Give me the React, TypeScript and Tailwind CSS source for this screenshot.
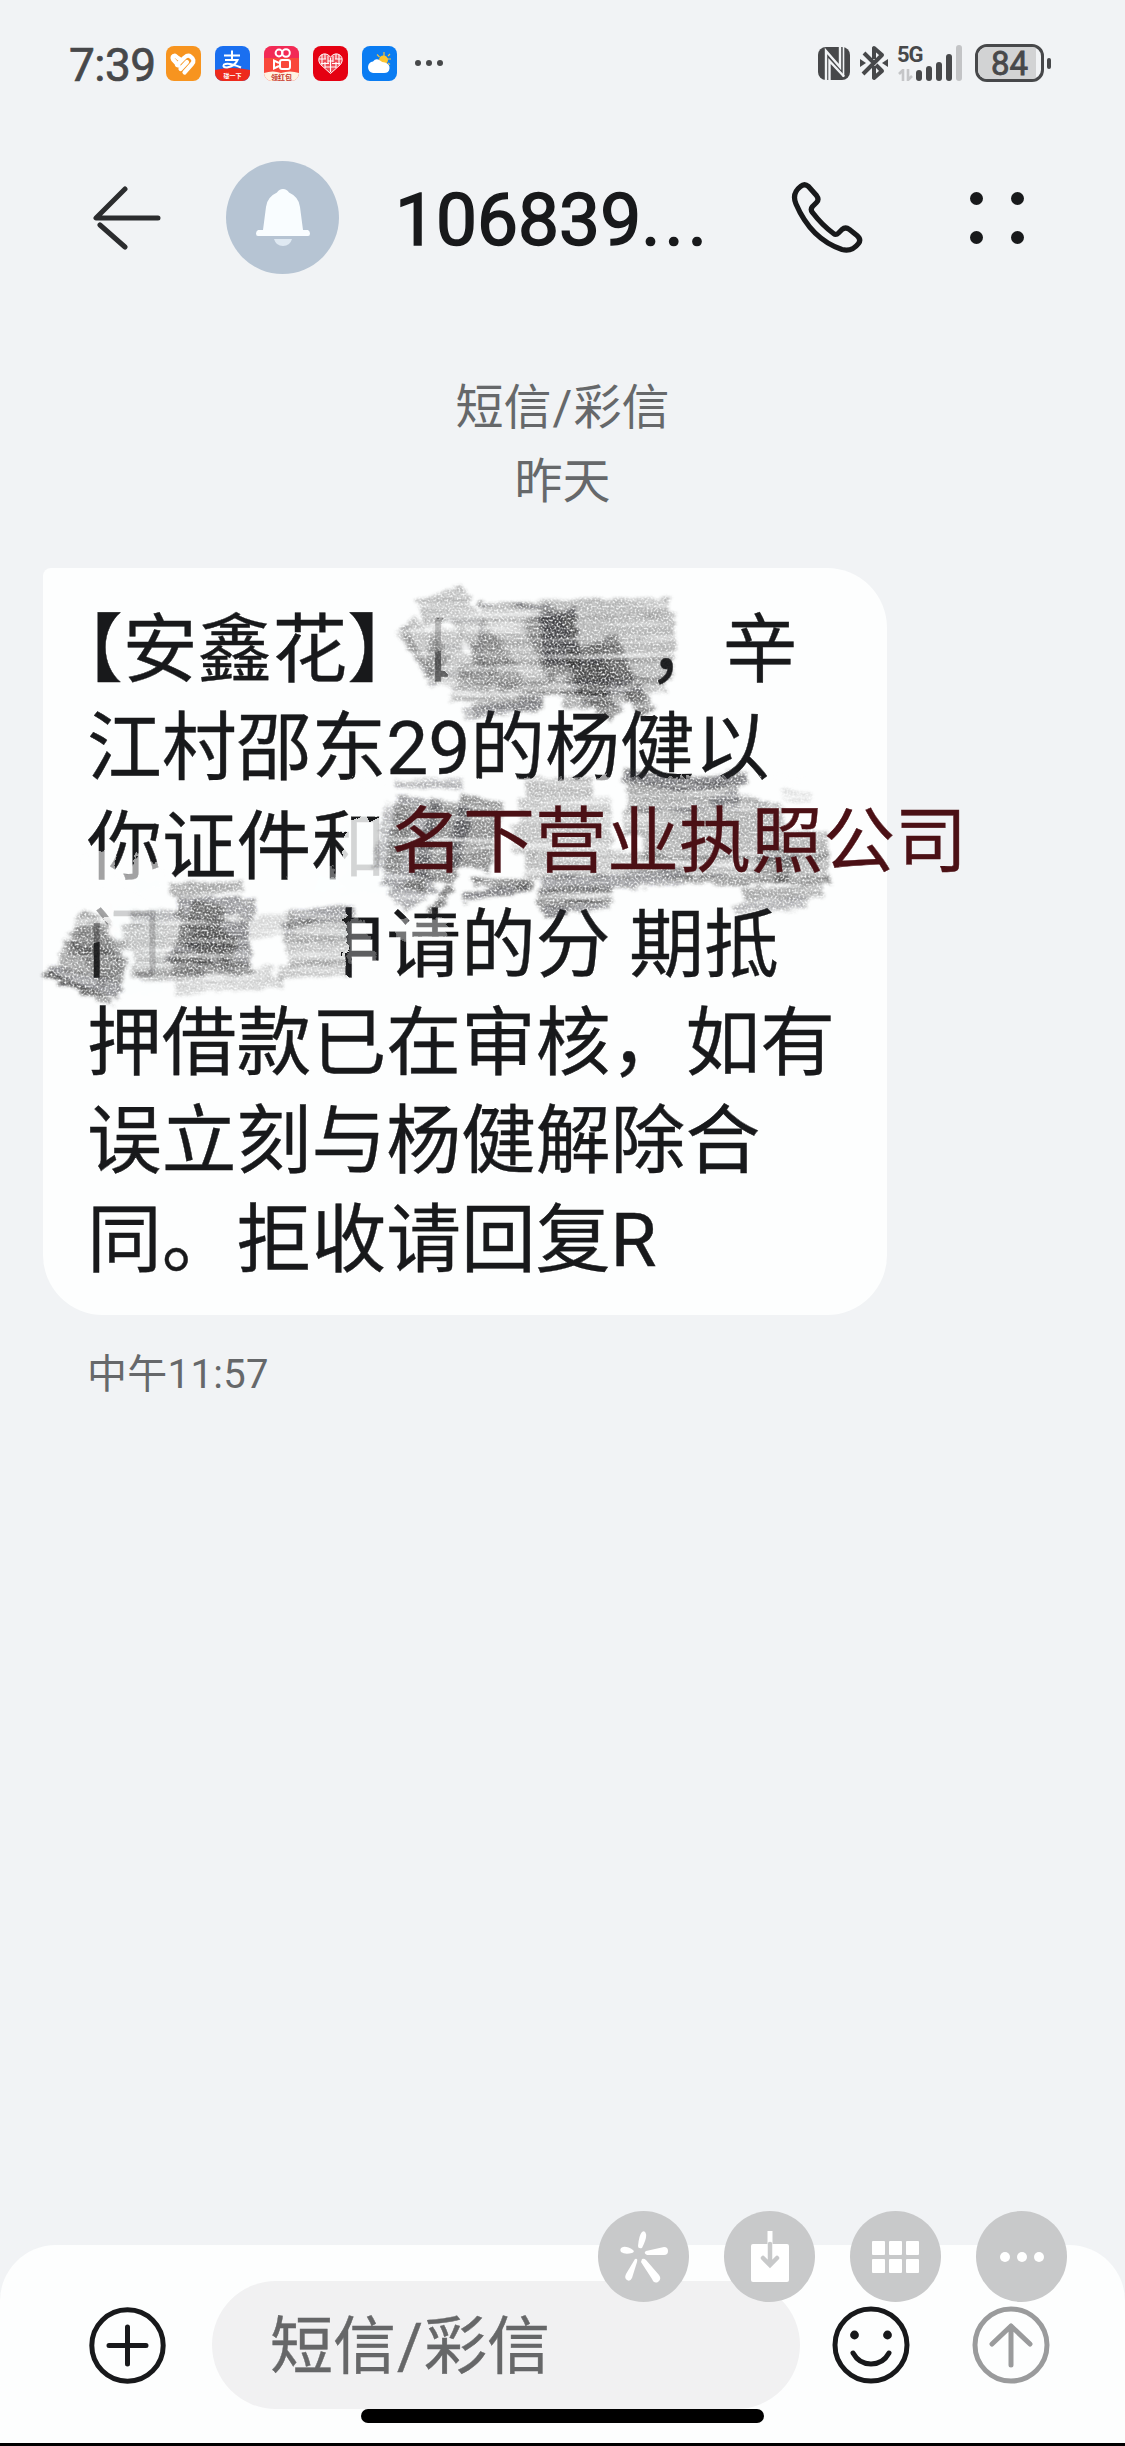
import React from 'react';

interface Stroke {
  d: string;
  w: number;
  o: number;
}

const messageLines: string[] = [
  '江村邵东29的杨健以',
  '你证件和',
  '门　　申请的分 期抵',
  '押借款已在审核，如有',
  '误立刻与杨健解除合',
  '同。拒收请回复R',
];

// Coordinates are relative to the top left corner of the bubble
const wipes: Stroke[] = [
  { d: 'M392 50 L394 84', w: 26, o: 0.6 },
  { d: 'M425 45 L425 120', w: 46, o: 0.9 },
  { d: 'M300 214 L760 212', w: 7, o: 0.6 },
  { d: 'M52 285 L58 320 M85 300 L115 320', w: 34, o: 0.6 },
  { d: 'M92 318 L300 316', w: 10, o: 0.4 },
  { d: 'M326 250 L326 325', w: 52, o: 0.82 },
  { d: 'M278 300 L290 325', w: 22, o: 0.35 },
  { d: 'M92 340 L92 425', w: 56, o: 0.8 },
  { d: 'M50 335 L60 372', w: 30, o: 0.6 },
  { d: 'M284 345 L284 425', w: 36, o: 0.97 },
  { d: 'M306 355 L324 400', w: 24, o: 0.3 },
  { d: 'M352 362 L404 360', w: 18, o: 0.4 },
];

const pencil: Stroke[] = [
  // first line
  { d: 'M362 56 L398 100', w: 26, o: 0.3 },
  { d: 'M360 60 L392 118', w: 8, o: 0.35 },
  { d: 'M378 46 L412 34 L470 118', w: 28, o: 0.34 },
  { d: 'M404 60 L400 98 L450 112', w: 34, o: 0.3 },
  { d: 'M438 44 L628 38', w: 18, o: 0.34 },
  { d: 'M436 64 L632 58', w: 24, o: 0.36 },
  { d: 'M430 86 L632 80', w: 24, o: 0.36 },
  { d: 'M416 108 L630 100', w: 24, o: 0.36 },
  { d: 'M408 126 L622 116', w: 16, o: 0.4 },
  { d: 'M428 142 L500 134 M520 136 L600 126', w: 14, o: 0.4 },
  { d: 'M420 146 L500 136', w: 12, o: 0.35 },
  { d: 'M496 48 L524 104', w: 40, o: 0.4 },
  { d: 'M514 42 L520 98', w: 36, o: 0.7 },
  { d: 'M548 76 L566 124', w: 56, o: 0.6 },
  { d: 'M538 98 L558 124', w: 42, o: 0.45 },
  { d: 'M550 126 L574 148 M588 122 L606 146', w: 18, o: 0.55 },
  { d: 'M436 36 L508 38', w: 3, o: 0.7 },
  { d: 'M474 128 L566 124', w: 4, o: 0.8 },
  // third line
  { d: 'M352 216 L420 216', w: 10, o: 0.35 },
  { d: 'M356 238 L344 302', w: 28, o: 0.35 },
  { d: 'M376 230 L360 320', w: 44, o: 0.48 },
  { d: 'M410 234 L390 312', w: 42, o: 0.55 },
  { d: 'M440 230 L424 300', w: 44, o: 0.55 },
  { d: 'M392 316 L348 328 M380 322 L358 336', w: 18, o: 0.45 },
  { d: 'M408 318 L392 340 L388 346', w: 10, o: 0.65 },
  { d: 'M420 330 L484 318', w: 10, o: 0.6 },
  { d: 'M430 314 L490 316', w: 8, o: 0.65 },
  { d: 'M482 220 L550 220', w: 22, o: 0.32 },
  { d: 'M476 244 L568 242', w: 26, o: 0.28 },
  { d: 'M470 272 L568 270', w: 30, o: 0.3 },
  { d: 'M482 298 L620 296', w: 26, o: 0.32 },
  { d: 'M498 318 L640 308', w: 16, o: 0.45 },
  { d: 'M494 330 L568 326', w: 18, o: 0.55 },
  { d: 'M500 344 L566 334', w: 12, o: 0.6 },
  { d: 'M580 208 L640 216 L704 210', w: 14, o: 0.6 },
  { d: 'M584 230 L696 228', w: 28, o: 0.42 },
  { d: 'M580 254 L740 250', w: 26, o: 0.38 },
  { d: 'M600 280 L786 276', w: 28, o: 0.38 },
  { d: 'M620 300 L786 296', w: 22, o: 0.34 },
  { d: 'M668 234 L690 230 L726 240', w: 12, o: 0.4 },
  { d: 'M740 226 L768 230', w: 10, o: 0.15 },
  { d: 'M716 288 L750 302', w: 32, o: 0.5 },
  { d: 'M640 312 L788 312', w: 8, o: 0.55 },
  { d: 'M700 326 L780 324', w: 12, o: 0.42 },
  { d: 'M690 342 L764 334', w: 12, o: 0.35 },
  // fourth line
  { d: 'M34 352 L64 366 M28 372 L80 384', w: 24, o: 0.42 },
  { d: 'M18 386 L82 402', w: 28, o: 0.46 },
  { d: 'M6 404 L78 422', w: 16, o: 0.5 },
  { d: 'M2 406 L70 434', w: 8, o: 0.7 },
  { d: 'M38 358 L72 410', w: 34, o: 0.32 },
  { d: 'M88 352 L140 346', w: 14, o: 0.35 },
  { d: 'M80 370 L150 366', w: 26, o: 0.3 },
  { d: 'M90 396 L160 398', w: 26, o: 0.32 },
  { d: 'M128 322 L200 318', w: 12, o: 0.42 },
  { d: 'M134 338 L212 340', w: 20, o: 0.5 },
  { d: 'M136 362 L206 366', w: 28, o: 0.6 },
  { d: 'M130 384 L208 390', w: 24, o: 0.5 },
  { d: 'M146 344 L166 350 L160 370 L190 384', w: 28, o: 0.55 },
  { d: 'M122 388 L168 392', w: 9, o: 0.65 },
  { d: 'M130 402 L210 400', w: 12, o: 0.42 },
  { d: 'M206 360 L250 356', w: 22, o: 0.18 },
  { d: 'M244 352 L312 342', w: 14, o: 0.45 },
  { d: 'M240 366 L306 360', w: 22, o: 0.38 },
  { d: 'M244 386 L306 382', w: 24, o: 0.3 },
  { d: 'M236 404 L306 400', w: 16, o: 0.28 },
  { d: 'M96 408 L230 404', w: 10, o: 0.22 },
  { d: 'M132 420 L240 414', w: 12, o: 0.25 },
];

const appIcons: React.ReactNode[] = [
  <svg key="fit" viewBox="0 0 35 35" className="size-[35px]">
    <rect width="35" height="35" rx="8" fill="#f7941f" />
    <g fill="none" stroke="#fff" strokeWidth="4.2" strokeLinecap="round" strokeLinejoin="round">
      <path d="M12.500 19.500 L7 13.500 Q5.500 10 9 9.500 L12 12 L15 14" />
      <path d="M11 19 L18.500 11.500 Q22 8.500 24.500 10.500 Q29.500 14 26 18 L18.500 26.500" />
      <path d="M14.500 23 L21 16" />
    </g>
  </svg>,
  <svg key="pay" viewBox="0 0 35 35" className="size-[35px]">
    <clipPath id="payClip"><rect width="35" height="35" rx="8" /></clipPath>
    <g clipPath="url(#payClip)">
      <rect width="35" height="35" fill="#1a6ff0" />
      <path d="M0 24 Q17 20 35 24 V35 H0 Z" fill="#ee2a1c" />
      <g fill="none" stroke="#fff" strokeWidth="2">
        <path d="M9 9.500 H25 M17 4.500 V14 M10 14 H22.500 Q20 20 12 21.500 Q7 21.500 9 18.500 Q13 16 26 21.500" />
      </g>
      <text x="17.500" y="31.500" textAnchor="middle" fontSize="6" fontWeight="700" fill="#fff">碰一下</text>
    </g>
  </svg>,
  <svg key="video" viewBox="0 0 35 35" className="size-[35px]">
    <clipPath id="videoClip"><rect width="35" height="35" rx="8" /></clipPath>
    <g clipPath="url(#videoClip)">
      <rect width="35" height="35" fill="#f9473a" />
      <rect width="35" height="12" fill="#f01e62" opacity="0.7" />
      <path d="M0 27 Q9 24 17 27 Q26 24 35 27 V35 H0 Z" fill="#fff3e2" />
      <g fill="none" stroke="#fff" strokeWidth="2">
        <circle cx="15" cy="7" r="3.400" />
        <circle cx="22" cy="7" r="3.800" />
        <rect x="16" y="14" width="10" height="9" rx="2" />
        <path d="M15 17 L10 14.500 V22.500 L15 20" />
      </g>
      <text x="17.500" y="34" textAnchor="middle" fontSize="7" fontWeight="700" fill="#c3342b">领红包</text>
    </g>
  </svg>,
  <svg key="heart" viewBox="0 0 35 35" className="size-[35px]">
    <rect width="35" height="35" rx="8" fill="#e50012" />
    <path
      d="M17.500 27.500 L7.500 18.500 Q4 13.500 7.500 9.500 Q12.500 5.500 17.500 11 Q22.500 5.500 27.500 9.500 Q31 13.500 27.500 18.500 Z"
      fill="#ee4e58" stroke="#fff" strokeWidth="1"
    />
    <path
      d="M9 8.500 V19 M12 8 V13 M12 16 V22 M15 10 V18 M20 10 V16 M23 8 V13 M26 8.500 V19 M23 16 V22 M17.500 12 V26 M6 13 H13 M15 15 H20 M22 13 H29 M8 17.500 H16 M19 17.500 H27 M12 21 H23"
      stroke="#fff" strokeWidth="1.100" fill="none"
    />
  </svg>,
  <svg key="weather" viewBox="0 0 35 35" className="size-[35px]">
    <rect width="35" height="35" rx="8" fill="#0a7cf2" />
    <path d="M22 6 V10 M29 13 H25 M15 8.500 L17.500 11 M28 8 L26 10 M28 18.500 L26 17" stroke="#f3c23c" strokeWidth="1.200" />
    <circle cx="21.500" cy="14" r="4.500" fill="#fdc52e" />
    <path d="M11 27 Q6 26 6 21 Q6.500 16 11 15.500 Q14 11.500 18 14.500 Q20 16.500 23 16.500 Q28 18 27.500 22.500 Q27 27 22 27 Z" fill="#fff" />
  </svg>,
];

const signalBars: string[] = ['h-[11px]', 'h-[15px]', 'h-[19px]', 'h-[27px]'];

const StatusBar: React.FC = () => (
  <div className="flex h-[126px] items-center pl-[69px] pr-[74px] text-[#47484a]">
    <span className="w-[97px] pt-[3px] text-[46px] leading-none tracking-[-0.5px] [-webkit-text-stroke:0.7px]">7:39</span>
    <div className="flex gap-[14px]">{appIcons}</div>
    <div className="ml-[18px] flex gap-[5px]">
      <i className="size-[6px] rounded-full bg-[#47484a]" />
      <i className="size-[6px] rounded-full bg-[#47484a]" />
      <i className="size-[6px] rounded-full bg-[#47484a]" />
    </div>
    <svg viewBox="0 0 32 33" className="ml-auto h-[33px] w-8">
      <rect width="32" height="33" rx="8" fill="#47484a" />
      <g fill="none" stroke="#f1f3f5" strokeWidth="2.400">
        <path d="M8 33 V4 L22 20 V0" />
        <path d="M11.500 33 V14 L26 29.500" />
        <path d="M25.500 0 V30" strokeWidth="1.600" />
      </g>
    </svg>
    <svg viewBox="0 0 28 36" className="ml-[10px] h-9 w-7">
      <g fill="none" stroke="#47484a" strokeWidth="4" strokeLinejoin="round">
        <path d="M4 8 L13 17 M16 20 L22 26 L14 33 V21 M3 29 L22 10 L14 3 V14" />
      </g>
      <path d="M0 14 L6 18 L0 22 Z M28 14 L22 18 L28 22 Z" fill="#47484a" />
    </svg>
    <div className="ml-[9px] mr-px flex h-9 items-end">
      <div className="flex h-full w-[19px] flex-col">
        <span className="text-[22px] font-bold leading-[20px] tracking-[-1px]">5G</span>
        <svg viewBox="0 0 16 12" className="mt-[4px] ml-px h-3 w-4">
          <path d="M1 5 L5 1 V12 M10 0 V11 L14 7" fill="none" stroke="#c5c6c8" strokeWidth="2.600" />
        </svg>
      </div>
      {signalBars.map((height) => (
        <i key={height} className={`mr-[4px] w-[6px] rounded-full bg-[#47484a] ${height}`} />
      ))}
      <i className="h-[36px] w-[6px] rounded-full bg-[#c3c4c6]" />
    </div>
    <div className="ml-[12px] flex h-[38px] w-[69px] items-center overflow-hidden rounded-[12px] border-[3px] border-[#47484a]">
      <div className="flex h-full w-[58px] items-center justify-center bg-[#d2d3d4] pl-[5px] text-[33px] leading-none [-webkit-text-stroke:0.8px]">
        84
      </div>
    </div>
    <i className="ml-[3px] h-[11px] w-[4px] rounded-full bg-[#47484a]" />
  </div>
);

const Header: React.FC = () => (
  <header className="flex h-[183px] items-center pl-[91px]">
    <svg viewBox="0 0 72 64" className="h-16 w-[72px]" fill="none" stroke="#2b2c2e" strokeWidth="5" strokeLinecap="round">
      <path d="M34 3 L5 32 H67" strokeLinejoin="round" />
      <path d="M9 39 L34 61" />
    </svg>
    <div className="ml-[63px] flex size-[113px] items-center justify-center rounded-full bg-[#b6c4d3]">
      <svg viewBox="0 0 54 58" className="h-[58px] w-[54px]" fill="#f9fdff">
        <path d="M27 0 Q31 0 33 3.500 Q43 8 44 18 L47 41 H52 Q54 42 54 44.500 Q54 47 52 47 H2 Q0 47 0 44.500 Q0 42 2 41 H7 L10 18 Q11 8 21 3.500 Q23 0 27 0 Z" />
        <path d="M18 50 H36 Q34 57 27 57 Q20 57 18 50 Z" fill="#dfe9f2" />
      </svg>
    </div>
    <h1 className="ml-[56px] w-[312px] whitespace-nowrap pt-[6px] text-[73px] leading-none text-[#18191b] [-webkit-text-stroke:1.6px]">
      106839<span className="tracking-[4px]">...</span>
    </h1>
    <svg viewBox="0 0 72 72" className="ml-[84px] size-[72px]" fill="none" stroke="#18191b" strokeWidth="5.200" strokeLinejoin="round">
      <path d="M9.500 4.500 Q13.500 1 17.500 4.500 L25.500 13.500 Q28.500 17.500 25.500 20.500 L21.500 24.500 Q19 27.500 21.500 30.500 Q31 43 42.500 51.500 Q45 53.500 47.500 51 L51 47.500 Q54.500 44.500 58.500 47.500 L66 53.500 Q70.500 57.500 67.500 61.500 Q61 70 51 67.500 Q20 57 5 22 Q0.500 11.500 9.500 4.500 Z" />
    </svg>
    <div className="ml-[107px] grid grid-cols-2 gap-x-[28px] gap-y-[26px]">
      <i className="size-[13px] rounded-full bg-[#18191b]" />
      <i className="size-[13px] rounded-full bg-[#18191b]" />
      <i className="size-[13px] rounded-full bg-[#18191b]" />
      <i className="size-[13px] rounded-full bg-[#18191b]" />
    </div>
  </header>
);

const Scribbles: React.FC = () => (
  <svg viewBox="0 0 860 480" className="pointer-events-none absolute left-0 top-0 h-[480px] w-[860px] overflow-visible" fill="none">
    <filter id="grain" filterUnits="userSpaceOnUse" x="-20" y="0" width="880" height="480">
      <feTurbulence type="fractalNoise" baseFrequency="0.5" numOctaves="2" seed="7" result="fine" />
      <feColorMatrix in="fine" type="matrix" values="0 0 0 0 0  0 0 0 0 0  0 0 0 0 0  2.6 0 0 0 -0.5" result="dots" />
      <feTurbulence type="fractalNoise" baseFrequency="0.05 0.2" numOctaves="2" seed="3" result="wide" />
      <feDisplacementMap in="SourceGraphic" in2="wide" scale="10" xChannelSelector="R" yChannelSelector="G" result="rough" />
      <feGaussianBlur in="rough" stdDeviation="1.6" result="soft" />
      <feTurbulence type="fractalNoise" baseFrequency="0.008 0.12" numOctaves="3" seed="5" result="lines" />
      <feColorMatrix in="lines" type="matrix" values="0 0 0 0 0  0 0 0 0 0  0 0 0 0 0  0 1.8 0 0 0.05" result="streaks" />
      <feComposite in="soft" in2="dots" operator="in" result="speckled" />
      <feComposite in="speckled" in2="streaks" operator="in" />
    </filter>
    <filter id="wipe" filterUnits="userSpaceOnUse" x="-20" y="0" width="880" height="480">
      <feTurbulence type="fractalNoise" baseFrequency="0.12" numOctaves="3" seed="11" result="noise" />
      <feDisplacementMap in="SourceGraphic" in2="noise" scale="14" xChannelSelector="R" yChannelSelector="G" />
    </filter>
    <g filter="url(#wipe)" stroke="#fdfefe">
      {wipes.map((s, i) => (
        <path key={i} d={s.d} strokeWidth={s.w} strokeOpacity={s.o} />
      ))}
    </g>
    <g filter="url(#grain)" stroke="#2e2e30">
      {pencil.map((s, i) => (
        <path key={i} d={s.d} strokeWidth={s.w} strokeOpacity={s.o} />
      ))}
    </g>
  </svg>
);

const MessageBubble: React.FC = () => (
  <div className="relative ml-[43px] h-[747px] w-[844px] rounded-[60px] rounded-tl-[8px] bg-[#fdfefe] pl-[44px] pt-[34px] text-[74.8px] leading-[98.3px] text-[#18191b] [-webkit-text-stroke:0.4px]">
    <p className="flex whitespace-pre">
      <span className="-ml-[39px]">【安鑫花】</span>
      <span className="w-[226px] opacity-60">日</span>
      <span>，辛</span>
    </p>
    {messageLines.map((line) => (
      <p key={line} className="whitespace-pre">{line}</p>
    ))}
    <Scribbles />
    <span className="absolute left-[348px] top-[225px] whitespace-nowrap text-[72px] text-[#4b1015]">名下营业执照公司</span>
  </div>
);

const floatingIcons: React.ReactNode[] = [
  <svg key="spark" viewBox="0 0 48 52" className="h-[52px] w-12" fill="#fff">
    <path d="M22 1 Q25 -1 26 3 Q27 7 22 17 Q18 18 18 15 Q19 4 22 1 Z" />
    <path d="M3 16 Q7 15 13 19 Q15 21 12 22 Q5 24 1 21 Q-1 17 3 16 Z" />
    <path d="M26 20 L44 16 Q48 16 48 20 Q48 24 44 24 L27 24 Q23 22 26 20 Z" />
    <path d="M15 28 Q18 27 17 31 L12 47 Q10 51 7 49 Q4 47 6 43 Z" />
    <path d="M22 28 Q24 27 26 29 L39 44 Q42 48 38 51 Q34 53 32 48 L21 31 Z" />
  </svg>,
  <svg key="save" viewBox="0 0 40 52" className="h-[52px] w-10">
    <rect x="1" y="13" width="38" height="38" rx="2" fill="#fff" />
    <path d="M20 0 V13" stroke="#fff" strokeWidth="5" />
    <path d="M20 13 V34 M13 27 L20 34 L27 27" stroke="#c8c9ca" strokeWidth="4.500" fill="none" strokeLinecap="round" />
  </svg>,
  <div key="grid" className="grid grid-cols-3 gap-[4px]">
    {[1, 2, 3, 4, 5, 6].map((n) => (
      <i key={n} className="h-[14px] w-[13px] rounded-[1px] bg-white" />
    ))}
  </div>,
  <div key="more" className="flex gap-[7px]">
    <i className="size-[10px] rounded-full bg-white" />
    <i className="size-[10px] rounded-full bg-white" />
    <i className="size-[10px] rounded-full bg-white" />
  </div>,
];

const Composer: React.FC = () => (
  <footer className="relative mt-auto flex h-[201px] flex-col items-center rounded-t-[56px] border-b-[3px] border-black bg-[#fdfefe] pt-9">
    <div className="flex h-[128px] w-full items-center pl-[89px]">
      <svg viewBox="0 0 77 77" className="size-[77px]" fill="none" stroke="#18191b" strokeWidth="5" strokeLinecap="round">
        <circle cx="38.500" cy="38.500" r="35.700" />
        <path d="M38.500 20 V57 M20 38.500 H57" />
      </svg>
      <div className="ml-[46px] flex h-full w-[588px] items-center rounded-full bg-[#f1f1f2] pl-[58px] pt-[3px] text-[63px] leading-none text-[#666768] [-webkit-text-stroke:0.4px]">
        短信<span className="px-px">/</span>彩信
      </div>
      <svg viewBox="0 0 78 78" className="ml-[32px] size-[78px]" fill="none" stroke="#18191b" strokeWidth="5" strokeLinecap="round">
        <circle cx="39" cy="39" r="36" />
        <path d="M21 47 Q27 58 39 58 Q51 58 57 47" />
        <circle cx="22.500" cy="29" r="4.400" fill="#18191b" stroke="none" />
        <circle cx="55.500" cy="29" r="4.400" fill="#18191b" stroke="none" />
      </svg>
      <svg viewBox="0 0 78 78" className="ml-[62px] size-[78px]" fill="none" stroke="#9a9b9c" strokeWidth="5" strokeLinecap="round" strokeLinejoin="round">
        <circle cx="39" cy="39" r="36" />
        <path d="M39 59 V20 M20 38 L39 20 L58 38" />
      </svg>
    </div>
    <div className="h-[14px] w-[403px] rounded-full bg-black" />
    <div className="absolute -top-[34px] left-[598px] flex gap-[35px]">
      {floatingIcons.map((icon, index) => (
        <div key={index} className="flex size-[91px] items-center justify-center rounded-full bg-[#c8c9ca]">
          {icon}
        </div>
      ))}
    </div>
  </footer>
);

const App: React.FC = () => {
  return (
    <div className="flex h-[2446px] w-[1125px] flex-col overflow-hidden bg-[#f1f3f5] font-['Roboto','Noto_Sans_CJK_SC',sans-serif]">
      <StatusBar />
      <Header />
      <div className="mt-[62px] h-[197px] text-center text-[48px] leading-[73.5px] text-[#66686a]">
        <p>短信<span className="px-px">/</span>彩信</p>
        <p>昨天</p>
      </div>
      <MessageBubble />
      <time className="ml-[87px] mt-[35px] text-[40px] leading-[50px] tracking-[0.3px] text-[#66686a]">中午11:57</time>
      <Composer />
    </div>
  );
};

export default App;
